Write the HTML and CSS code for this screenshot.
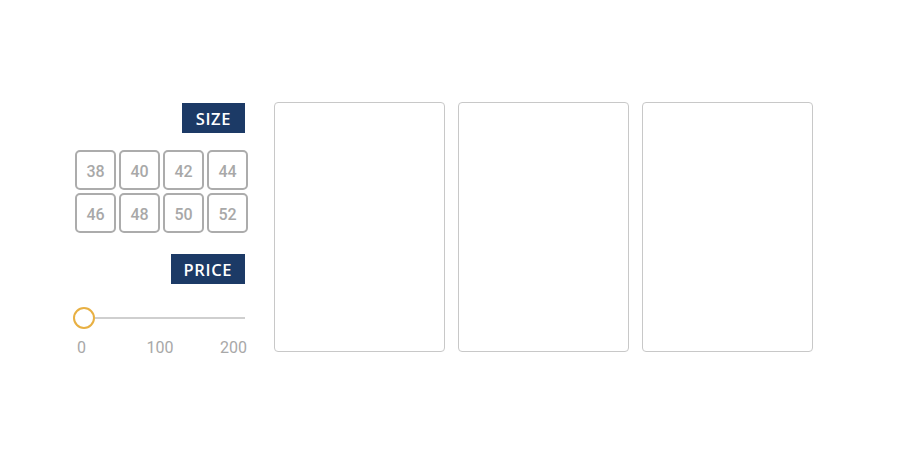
FILE: index.html
```html
<!DOCTYPE html>
<html>
<head>
<meta charset="utf-8">
<link rel="stylesheet" href="styles.css">
</head>
<body>
<div class="page">
  <aside class="filters">
    <div class="label">SIZE</div>
    <div class="sizes">
      <div class="size">38</div><div class="size">40</div><div class="size">42</div><div class="size">44</div>
      <div class="size">46</div><div class="size">48</div><div class="size">50</div><div class="size">52</div>
    </div>
    <div class="label price">PRICE</div>
    <div class="slider">
      <div class="thumb"></div>
      <div class="track"></div>
    </div>
    <div class="ticks"><span>0</span><span class="mid">100</span><span class="end">200</span></div>
  </aside>
  <main class="cards">
    <div class="card"></div>
    <div class="card"></div>
    <div class="card"></div>
  </main>
</div>
</body>
</html>
```
FILE: styles.css
```css
html, body { margin: 0; padding: 0; background: #fff; }
body { width: 900px; height: 450px; overflow: hidden; font-family: Roboto, "Liberation Sans", sans-serif; }
.page { display: flex; padding: 102px 0 0 75px; gap: 27px; }
.filters { width: 172px; display: flex; flex-direction: column; padding-top: 1px; }
.label {
  align-self: flex-end; margin-right: 2px;
  background: #1c3a66; color: #fff;
  height: 30px; line-height: 31px; padding: 0 14px;
  font-family: "Open Sans", "Liberation Sans", sans-serif; font-weight: 600;
  font-size: 16.5px; letter-spacing: 0.6px;
}
.price { padding: 0 13px; }
.sizes { display: grid; grid-template-columns: repeat(4, 41px); grid-auto-rows: 40px; gap: 3px; margin-top: 17px; }
.size {
  box-sizing: border-box; border: 2px solid #acacac; border-radius: 5px;
  display: flex; align-items: center; justify-content: center; padding-top: 2px;
  color: #a8a8a8; font-weight: 500; font-size: 16px;
}
.price { margin-top: 21px; }
.slider { position: relative; height: 22px; margin-top: 23px; display: flex; align-items: center; padding-left: 20px; padding-right: 2px; }
.track { flex: 1; height: 2px; background: #cfcfcf; margin-top: -1px; }
.thumb {
  position: absolute; left: -2px; top: 0; width: 22px; height: 22px; box-sizing: border-box;
  border: 2px solid #e8b043; border-radius: 50%; background: #fff;
}
.ticks { display: grid; grid-template-columns: 1fr auto 1fr; margin-top: 9px; padding-left: 2px; color: #a8a8a8; font-size: 16px; }
.mid { margin-right: 4px; }
.end { text-align: right; }
.cards { display: flex; gap: 13px; }
.card { width: 171px; height: 250px; box-sizing: border-box; border: 1px solid #c8c8c8; border-radius: 4px; }
```
